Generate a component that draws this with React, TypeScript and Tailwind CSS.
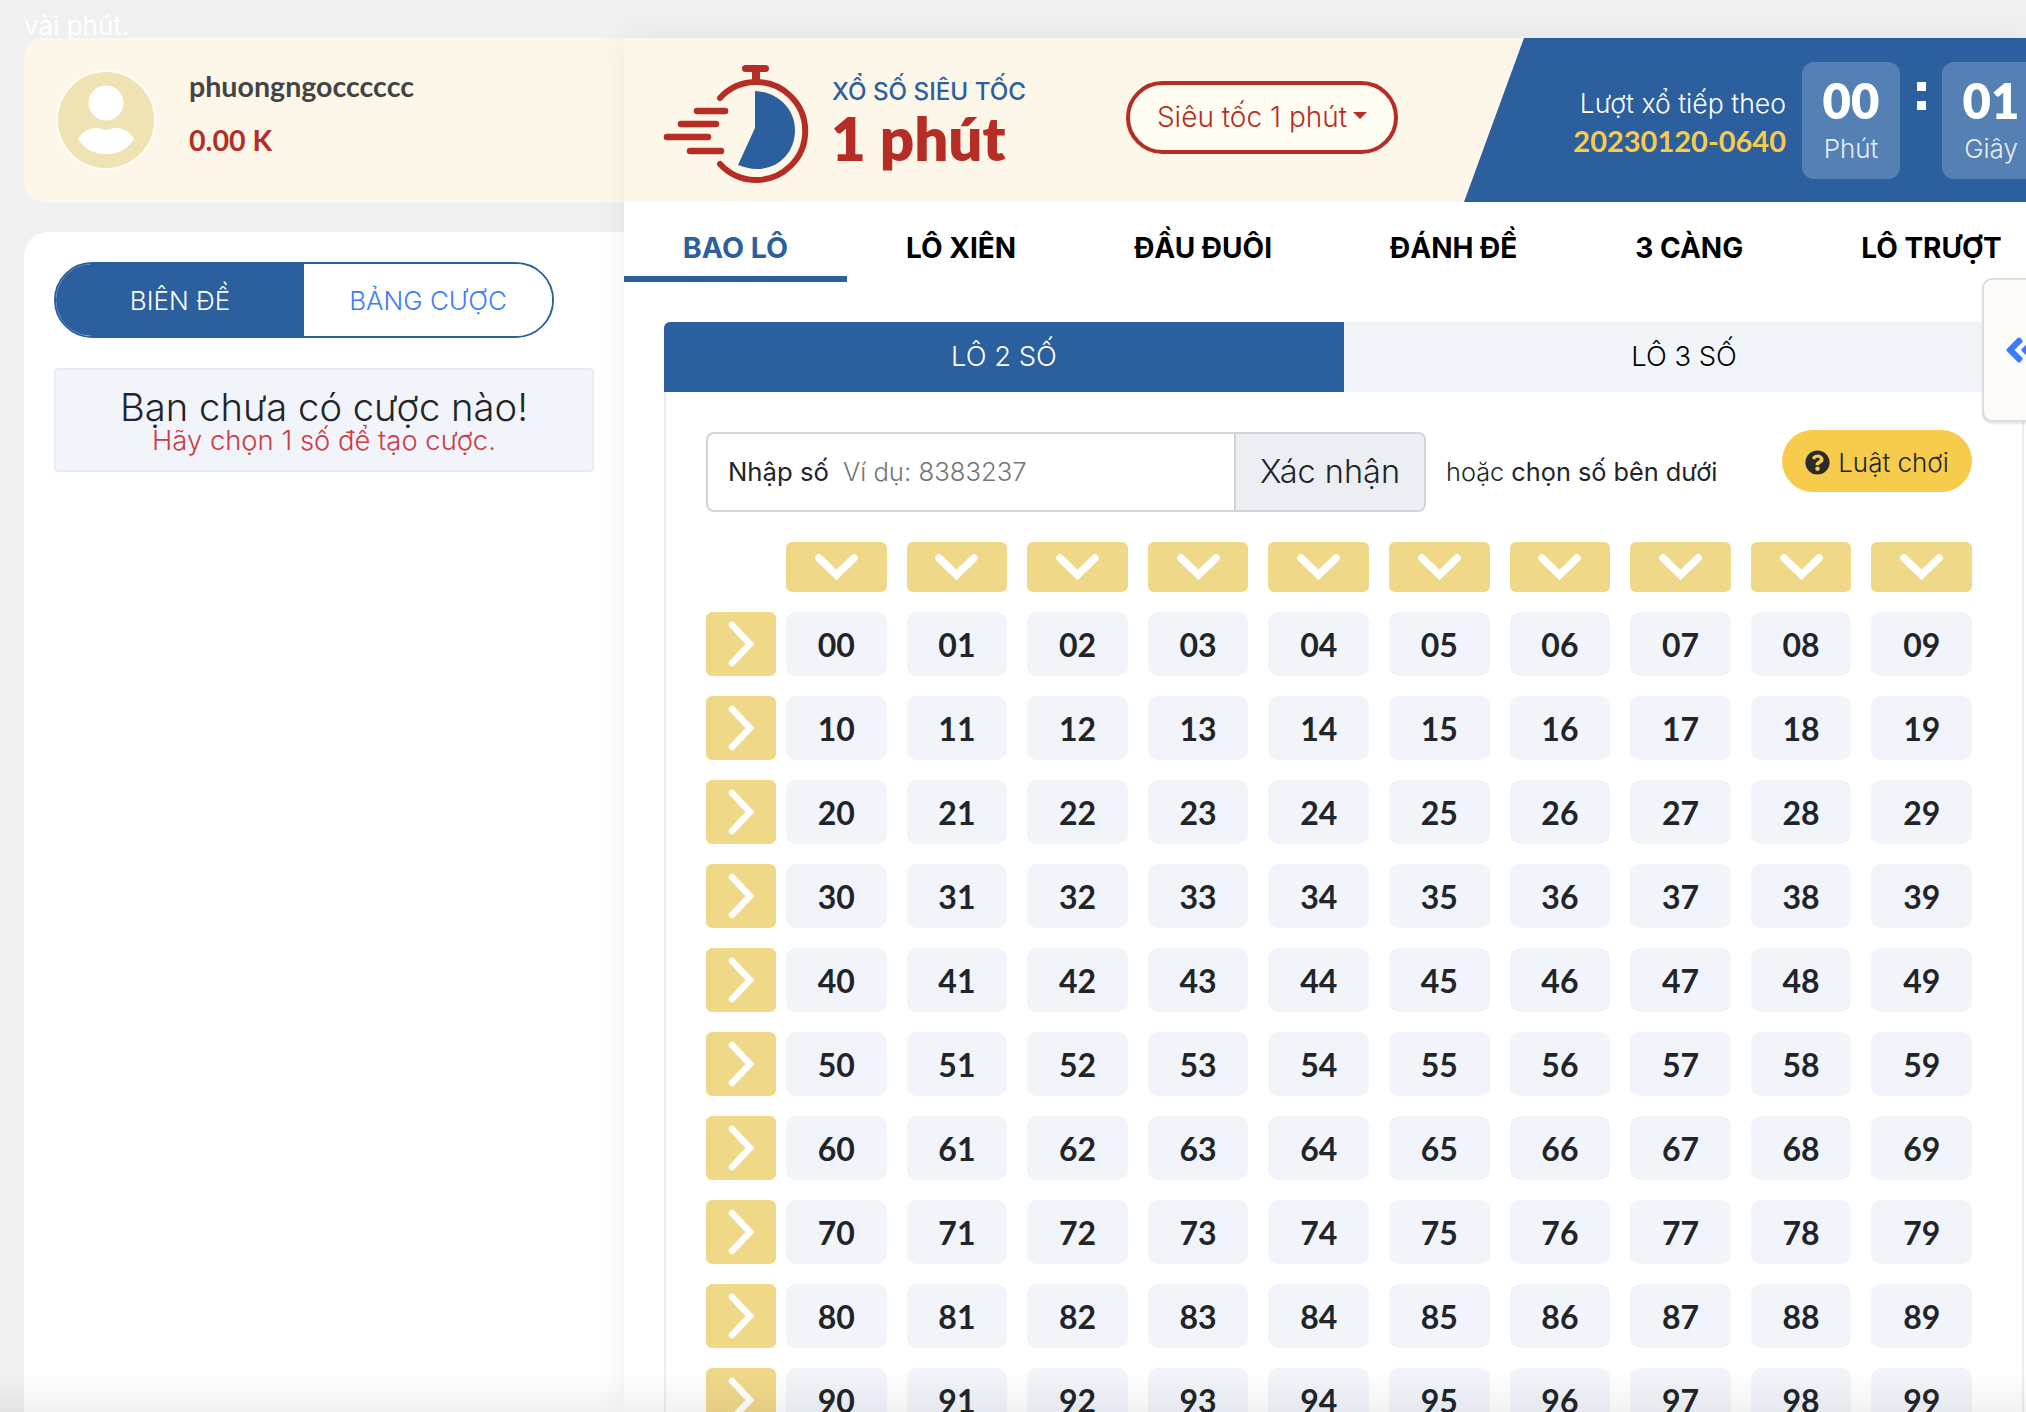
import { FaQuestionCircle, FaAngleDoubleLeft } from "react-icons/fa";

const tabs = ["BAO LÔ", "LÔ XIÊN", "ĐẦU ĐUÔI", "ĐÁNH ĐỀ", "3 CÀNG", "LÔ TRƯỢT"];
const tens = [0, 1, 2, 3, 4, 5, 6, 7, 8, 9];

const Stopwatch = () => (
  <svg width="146" height="118" viewBox="0 0 146 118" className="shrink-0" fill="none">
    <path d="M57 33 A49 49 0 1 1 57 99" stroke="#b52d24" strokeWidth="6" strokeLinecap="round" />
    <rect x="79" y="0" width="27" height="7" rx="3.5" fill="#b52d24" />
    <rect x="89" y="6" width="8" height="9" fill="#b52d24" />
    <path d="M92 26 C115 27 132 44 132 65 C132 88 115 104 94 104 C87 104 81 102 75 100 L92 63 Z" fill="#2c5f9e" />
    <g stroke="#b52d24" strokeWidth="6.5" strokeLinecap="round">
      <path d="M34 46 H62" />
      <path d="M18 59 H53" />
      <path d="M4 72 H45" />
      <path d="M27 86 H58" />
    </g>
  </svg>
);

const ChevronDown = () => (
  <svg width="43" height="26" viewBox="0 0 43 26" fill="none">
    <path d="M4 4 L21.5 21 L39 4" stroke="#fff" strokeWidth="7.5" strokeLinecap="round" strokeLinejoin="miter" />
  </svg>
);

const ChevronRight = () => (
  <svg width="26" height="46" viewBox="0 0 26 46" fill="none">
    <path d="M4 4 L22 23 L4 42" stroke="#fff" strokeWidth="6.5" strokeLinecap="round" strokeLinejoin="miter" />
  </svg>
);

const Avatar = () => (
  <div className="w-[100px] h-[100px] rounded-full bg-[#f0e3b3] border-2 border-[#fffdf5] shrink-0 flex items-center justify-center">
    <svg width="60" height="70" viewBox="0 0 60 70" fill="none">
      <circle cx="30" cy="18" r="17.5" fill="#fff" />
      <path d="M2 54 C6 47 13 43 20 43 C25 43 27 45 30 45 C33 45 35 43 40 43 C47 43 54 47 58 54 C52 64 42 69 30 69 C18 69 8 64 2 54 Z" fill="#fff" />
    </svg>
  </div>
);

export default function App() {
  return (
    <div className="relative w-[2026px] h-[1412px] overflow-hidden bg-[#f0f0f0] flex [font-family:Inter,sans-serif] text-[#212529]">
      {/* left column */}
      <div className="w-[624px] shrink-0 pl-[24px] flex flex-col">
        <div className="h-[38px] text-white text-[26px] leading-[52px] whitespace-nowrap">vài phút.</div>
        <div className="h-[164px] bg-[#fdf7e9] rounded-l-[20px] flex items-center pl-[32px]">
          <Avatar />
          <div className="ml-[33px] flex flex-col gap-[24px] -mt-[14px]">
            <div className="text-[28.6px] leading-[30px] font-bold text-[#444] [font-family:Lato,Inter,sans-serif]">phuongngocccccc</div>
            <div className="text-[28.6px] leading-[30px] font-bold text-[#b52d24] [font-family:Lato,Inter,sans-serif]">0.00 K</div>
          </div>
        </div>
        <div className="mt-[30px] flex-1 bg-white rounded-tl-[24px] pl-[30px] pr-[30px] pt-[30px]">
          <div className="flex w-[500px] h-[76px] rounded-full border-2 border-[#2c5f9e] overflow-hidden">
            <div className="w-[248px] bg-[#2c5f9e] text-white text-[26px] font-light flex items-center justify-center">BIÊN ĐỀ</div>
            <div className="flex-1 bg-white text-[#3b7cff] text-[26px] font-light flex items-center justify-center">BẢNG CƯỢC</div>
          </div>
          <div className="mt-[30px] h-[104px] bg-[#f1f4f9] border-2 border-[#e9edf3] rounded-[4px] flex flex-col items-center pt-[15px]">
            <div className="text-[38.2px] leading-[44px] font-light text-[#212529]">Bạn chưa có cược nào!</div>
            <div className="text-[27.4px] leading-[26px] -mt-[2px] font-light text-[#cf3a44]">Hãy chọn 1 số để tạo cược.</div>
          </div>
        </div>
      </div>

      {/* main panel */}
      <div className="w-[1402px] shrink-0 mt-[38px] bg-white shadow-[0_0_30px_rgba(0,0,0,0.06)] overflow-hidden">
        <div className="h-[164px] bg-[#fdf7e9] flex">
          <div className="flex items-center pl-[39px] pt-[7px]">
            <Stopwatch />
            <div className="ml-[23px] w-[294px] shrink-0 -mt-[5px]">
              <div className="text-[24.2px] leading-[32px] font-medium text-[#2c5f9e] whitespace-nowrap mt-[4px]">XỔ SỐ SIÊU TỐC</div>
              <div className="text-[60px] leading-[66px] font-extrabold text-[#b52d24] whitespace-nowrap -ml-[1px] -mt-[3px] [font-family:Lato,Inter,sans-serif]">1 phút</div>
            </div>
          </div>
          <div className="self-center -mt-[6px] w-[272px] h-[73px] shrink-0 rounded-full border-[4px] border-[#b52d24] bg-[#fffcf2] flex items-center justify-center gap-[6px] text-[#b52d24] text-[28px] font-light whitespace-nowrap">
            Siêu tốc 1 phút
            <span className="w-0 h-0 border-x-[7px] border-x-transparent border-t-[7px] border-t-[#b52d24] -mt-[4px]" />
          </div>
          <div className="ml-[66px] w-[562px] shrink-0 bg-[#2c5f9e] [clip-path:polygon(60px_0,100%_0,100%_100%,0_100%)] flex items-start">
            <div className="w-[322px] shrink-0 text-right pt-[47px]">
              <div className="text-[26.6px] leading-[36px] font-light text-white">Lượt xổ tiếp theo</div>
              <div className="text-[29px] leading-[40px] font-bold text-[#f7cb4c] [font-family:Lato,Inter,sans-serif]">20230120-0640</div>
            </div>
            <div className="ml-[16px] mt-[24px] w-[98px] h-[117px] shrink-0 rounded-[12px] bg-[#5480b3] flex flex-col items-center text-white">
              <div className="text-[49px] leading-[56px] font-extrabold mt-[10px] [font-family:Lato,Inter,sans-serif]">00</div>
              <div className="text-[26px] leading-[32px] font-light mt-[5px] text-[#e6edf5]">Phút</div>
            </div>
            <div className="w-[42px] shrink-0 flex flex-col items-center gap-[10px] mt-[44px]">
              <span className="w-[9px] h-[9px] bg-white" />
              <span className="w-[9px] h-[9px] bg-white" />
            </div>
            <div className="mt-[24px] w-[98px] h-[117px] shrink-0 rounded-[12px] bg-[#5480b3] flex flex-col items-center text-white">
              <div className="text-[49px] leading-[56px] font-extrabold mt-[10px] [font-family:Lato,Inter,sans-serif]">01</div>
              <div className="text-[26px] leading-[32px] font-light mt-[5px] text-[#e6edf5]">Giây</div>
            </div>
          </div>
        </div>

        <div className="flex h-[80px]">
          {tabs.map((t, i) => (
            <div
              key={t}
              className={
                i === 0
                  ? "w-[223px] shrink-0 flex items-center justify-center whitespace-nowrap text-[28.6px] font-bold text-[#2c5f9e] border-b-[6px] border-[#2c5f9e] pt-[18px]"
                  : "px-[59px] shrink-0 flex items-center whitespace-nowrap text-[28px] font-bold text-black border-b-[6px] border-transparent pt-[18px]"
              }
            >
              {t}
            </div>
          ))}
        </div>

        <div className="ml-[40px] mt-[40px] w-[1360px]">
          <div className="flex h-[70px]">
            <div className="w-[680px] rounded-tl-[6px] bg-[#2c5f9e] text-white text-[27.4px] font-light flex items-center justify-center">LÔ 2 SỐ</div>
            <div className="w-[680px] bg-[#f1f4f9] text-black text-[27.4px] font-light flex items-center justify-center">LÔ 3 SỐ</div>
          </div>
          <div className="border-x-2 border-[#e9edf3] pl-[40px] pr-[50px] pt-[40px]">
            <div className="flex items-center h-[80px]">
              <div className="w-[720px] h-[80px] shrink-0 flex rounded-[8px] border-2 border-[#ced4da] overflow-hidden">
                <div className="w-[526px] flex items-center pl-[20px] text-[25.7px] whitespace-nowrap font-light">
                  <span className="text-[#212529] font-normal">Nhập số</span>
                  <span className="ml-[14px] text-[#757575]">Ví dụ: 8383237</span>
                </div>
                <div className="flex-1 bg-[#ebeff4] border-l-2 border-[#ced4da] flex items-center justify-center text-[32.5px] font-light whitespace-nowrap">Xác nhận</div>
              </div>
              <div className="ml-[20px] text-[25.3px] font-light whitespace-nowrap">
                hoặc <span className="font-normal">chọn số bên dưới</span>
              </div>
              <div className="ml-auto self-start -mt-[2px] w-[190px] h-[62px] rounded-full bg-[#f7cb4c] flex items-center justify-center gap-[8px] pt-[3px] text-[26px] font-light whitespace-nowrap">
                <FaQuestionCircle className="text-[#2b2b2b] text-[25px]" />
                Luật chơi
              </div>
            </div>

            <div className="mt-[30px] flex">
              <div className="w-[80px] shrink-0" />
              <div className="flex-1 grid grid-cols-10 gap-x-[20px]">
                {tens.map((n) => (
                  <div key={n} className="h-[50px] rounded-[6px] bg-[#f0d889] flex items-center justify-center">
                    <ChevronDown />
                  </div>
                ))}
              </div>
            </div>

            <div className="mt-[20px] flex flex-col gap-[20px]">
              {tens.map((row) => (
                <div key={row} className="flex">
                  <div className="w-[70px] h-[64px] mr-[10px] shrink-0 rounded-[6px] bg-[#f0d889] flex items-center justify-center">
                    <ChevronRight />
                  </div>
                  <div className="flex-1 grid grid-cols-10 gap-x-[20px]">
                    {tens.map((col) => (
                      <div key={col} className="h-[64px] pt-[2px] rounded-[10px] bg-[#f1f4f9] flex items-center justify-center text-[32px] font-bold text-[#212529] [font-family:Lato,Inter,sans-serif]">
                        {row}
                        {col}
                      </div>
                    ))}
                  </div>
                </div>
              ))}
            </div>
          </div>
        </div>
      </div>

      {/* side handle */}
      <div className="absolute right-[-20px] top-[278px] w-[64px] h-[144px] rounded-[10px] bg-[#fdfbf7] border-2 border-[#dddddd] shadow-[0_2px_2px_rgba(0,0,0,0.1)] flex items-center pl-[18px]">
        <FaAngleDoubleLeft className="text-[#3b7cff] text-[40px] shrink-0" />
      </div>

      {/* bottom fade */}
      <div className="absolute left-0 right-0 bottom-0 h-[40px] bg-gradient-to-b from-transparent to-black/5 pointer-events-none" />
    </div>
  );
}
